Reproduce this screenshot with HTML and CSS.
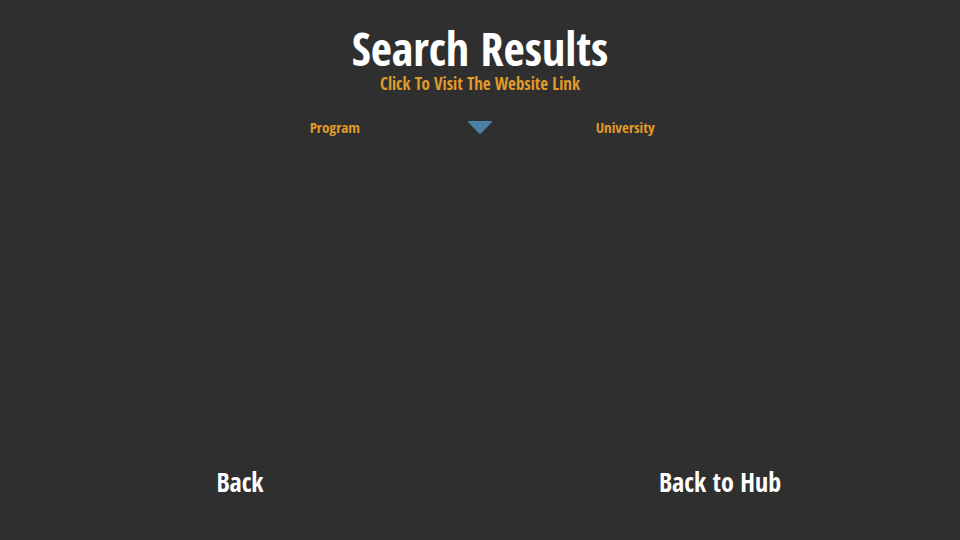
FILE: index.html
```html
<!DOCTYPE html>
<html lang="en">
<head>
<meta charset="utf-8">
<title>Search Results</title>
<link rel="stylesheet" href="styles.css">
</head>
<body>
<header class="heading">
  <h1 class="title">Search Results</h1>
  <p class="subtitle">Click To Visit The Website Link</p>
</header>
<main class="results">
  <div class="columns">
    <span class="column">Program</span>
    <button class="sort" type="button" aria-label="Sort">
      <svg class="arrow" viewBox="0 0 24 13" aria-hidden="true"><path d="M0 0H24V1L12.500 13H11.500L0 1Z"/></svg>
    </button>
    <span class="column">University</span>
  </div>
</main>
<nav class="actions">
  <button class="action" type="button">Back</button>
  <button class="action" type="button">Back to Hub</button>
</nav>
</body>
</html>
```
FILE: styles.css
```css
* { box-sizing: border-box; }
body {
  margin: 0;
  min-height: 100vh;
  display: flex;
  flex-direction: column;
  background: #2f2f2f;
  color: #fff;
  font-family: "Agency FB", "Open Sans Condensed", "Liberation Sans Narrow", "DejaVu Sans Condensed", sans-serif;
  font-weight: 700;
}
.heading { padding-top: 24px; text-align: center; }
.title { margin: 0; font-size: 46px; line-height: 48px; }
.subtitle { margin: 0; font-size: 17px; line-height: 24px; color: #e09a27; }
.results { flex: 1; padding-top: 21px; }
.columns { display: grid; grid-template-columns: 1fr auto 1fr; align-items: center; width: 58%; margin: 0 auto; }
.column { text-align: center; font-size: 15px; line-height: 20px; color: #e09a27; }
.sort { display: flex; padding: 0; border: 0; background: none; }
.arrow { width: 24px; height: 13px; fill: #4a80a4; }
.actions { display: grid; grid-template-columns: 1fr 1fr; padding-bottom: 40px; }
.action { padding: 0; border: 0; background: none; color: inherit; font: inherit; font-size: 26px; line-height: 36px; }
```
